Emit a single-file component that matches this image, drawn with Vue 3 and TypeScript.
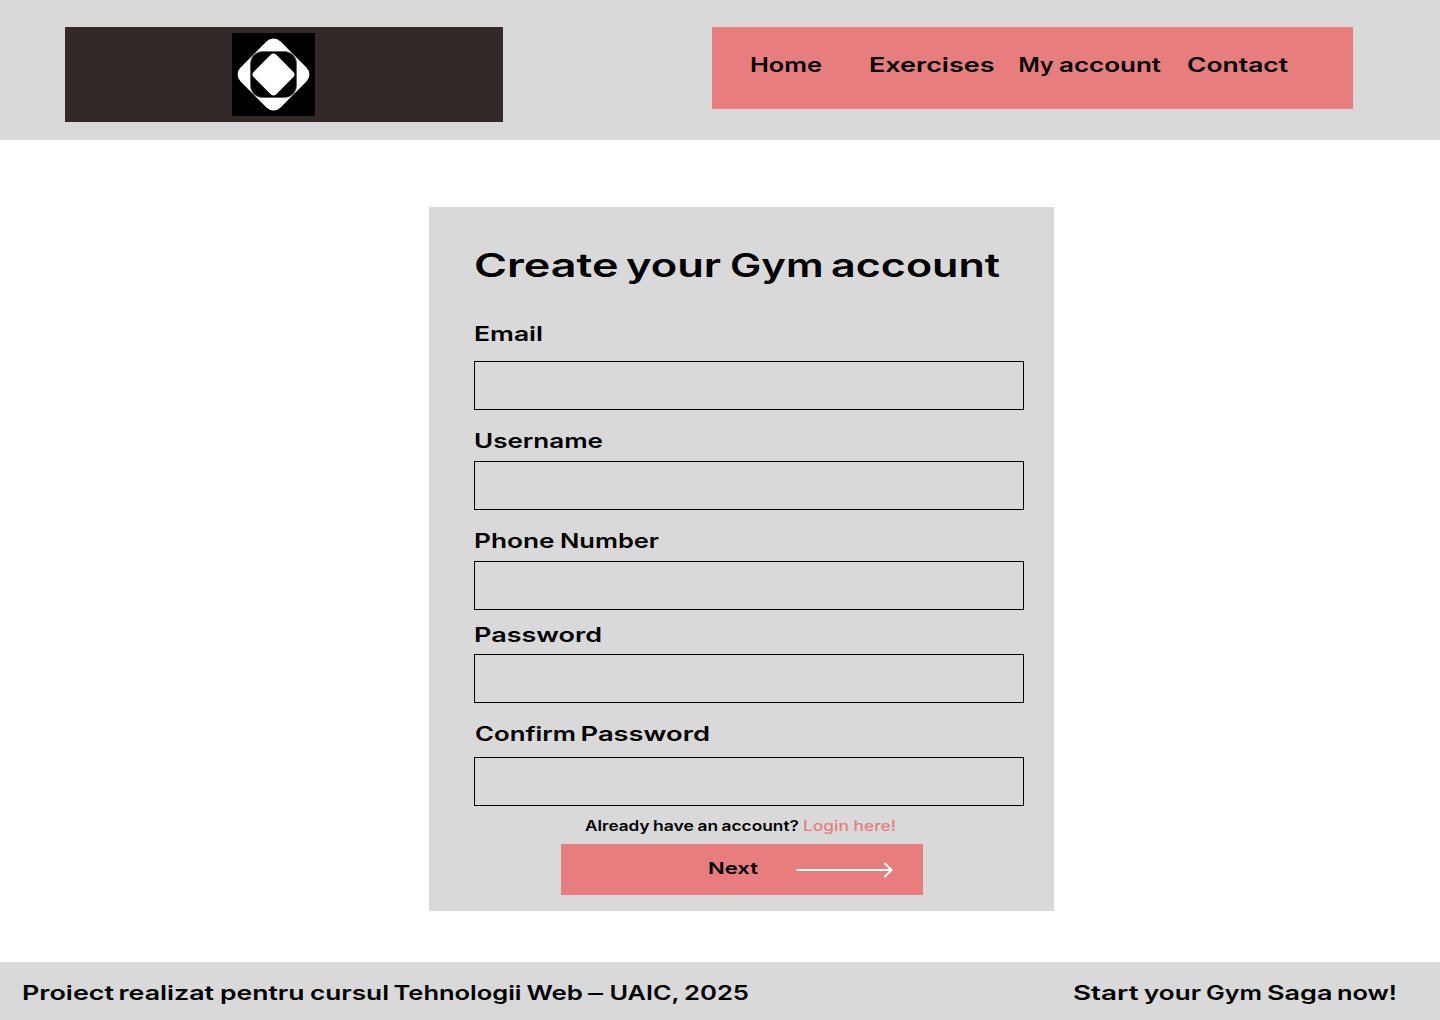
<script setup lang="ts">
import { h, type FunctionalComponent } from 'vue'

interface LabelProps {
  text: string
  width: number
  size: number
  // [start, end] of every word, in pixels from the label's left edge
  words?: number[][]
}

// Wide lettering: the glyphs are stretched to the given width.
const WideText: FunctionalComponent<LabelProps> = ({ text, width, size, words }) => {
  const spans = words ?? [[0, width]]
  const parts = words ? text.split(' ') : [text]
  return h('svg', { width, height: size, class: 'wide-text' }, [
    h('text', { y: size * 0.86, 'font-size': size }, parts.flatMap((part, i) => [
      i ? ' ' : '',
      h('tspan', {
        x: spans[i][0],
        textLength: spans[i][1] - spans[i][0],
        lengthAdjust: 'spacingAndGlyphs',
      }, part),
    ])),
  ])
}
WideText.props = ['text', 'width', 'size', 'words']

const links = [
  { text: 'Home', width: 72, gap: 0 },
  { text: 'Exercises', width: 125.5, gap: 47 },
  { text: 'My account', width: 142, gap: 24, words: [[0.5, 35.5], [41, 143]] },
  { text: 'Contact', width: 101, gap: 26.5 },
]

const fields = [
  { id: 'email', text: 'Email', type: 'email', width: 69, top: 42, gap: 17 },
  { id: 'username', text: 'Username', type: 'text', width: 129, top: 21, gap: 10 },
  { id: 'phone', text: 'Phone Number', type: 'tel', width: 185, top: 21, gap: 10, words: [[0, 80.5], [86, 185]] },
  { id: 'password', text: 'Password', type: 'password', width: 128, top: 15, gap: 9 },
  { id: 'confirm', text: 'Confirm Password', type: 'password', width: 236, top: 21, gap: 13, words: [[1, 102], [106.5, 236]] },
]

const titleWords = [[0, 144.5], [152, 247], [256, 349.5], [357, 526]]
const hintWords = [[0, 64.5], [68, 109], [112.5, 133], [136.5, 214]]
const creditWords = [
  [0, 92], [96.5, 192], [198, 282.5], [288, 367], [371.5, 499.5],
  [504.5, 561], [566, 581], [587.5, 657], [662, 727],
]
const sloganWords = [[0, 65.5], [71, 128], [133, 189], [194, 259.5], [264, 324]]
</script>

<template>
  <div class="page">
    <header class="header">
      <div class="brand">
        <svg class="logo" width="83" height="83" viewBox="0 0 83 83">
          <rect width="83" height="83" fill="#000" />
          <rect x="13.2" y="13.2" width="56.6" height="56.6" rx="10" fill="#fff" transform="rotate(45 41.5 41.5)" />
          <rect x="18.5" y="18.5" width="46" height="46" rx="12" fill="#000" stroke="#555" stroke-width="0.7" />
          <rect x="25.6" y="25.6" width="31.8" height="31.8" rx="4" fill="#fff" transform="rotate(45 41.5 41.5)" />
        </svg>
      </div>
      <nav class="nav">
        <a v-for="link in links" :key="link.text" :style="{ marginLeft: link.gap + 'px' }">
          <WideText :text="link.text" :width="link.width" :size="20.2" :words="link.words" />
        </a>
      </nav>
    </header>

    <main class="main">
      <form class="card" @submit.prevent>
        <h1><WideText text="Create your Gym account" :width="526" :size="32.6" :words="titleWords" /></h1>
        <div v-for="f in fields" :key="f.id" class="field" :style="{ paddingTop: f.top + 'px', rowGap: f.gap + 'px' }">
          <label :for="f.id"><WideText :text="f.text" :width="f.width" :size="20.2" :words="f.words" /></label>
          <input :id="f.id" :type="f.type" />
        </div>
        <p class="hint">
          <WideText text="Already have an account?" :width="214" :size="14" :words="hintWords" />
          <a><WideText text="Login here!" :width="93" :size="14" /></a>
        </p>
        <button class="next" type="submit">
          <WideText text="Next" :width="50" :size="16.4" />
          <svg class="arrow" width="98" height="18" viewBox="0 0 98 18" fill="none" stroke="#fff" stroke-width="2">
            <path d="M0.5 9H96M88.5 2L95.5 9L88.5 16" />
          </svg>
        </button>
      </form>
    </main>

    <footer class="footer">
      <WideText text="Proiect realizat pentru cursul Tehnologii Web – UAIC, 2025" :width="727" :size="20.2" :words="creditWords" />
      <WideText text="Start your Gym Saga now!" :width="325" :size="20.2" :words="sloganWords" />
    </footer>
  </div>
</template>

<style>
body {
  margin: 0;
}
</style>

<style scoped>
.page {
  width: 1440px;
  height: 1020px;
  display: flex;
  flex-direction: column;
  background: #fff;
  color: #000;
  font-family: Inter, "DejaVu Sans", sans-serif;
  font-weight: 600;
}
.wide-text {
  display: block;
  flex: none;
  overflow: visible;
  fill: currentColor;
}
.header {
  box-sizing: border-box;
  height: 140px;
  padding: 27px 87px 0 65px;
  display: flex;
  align-items: flex-start;
  justify-content: space-between;
  background: #d9d9d9;
}
.brand {
  box-sizing: border-box;
  width: 438px;
  height: 95px;
  padding: 6px 0 0 167px;
  background: #342929;
}
.logo {
  display: block;
}
.nav {
  box-sizing: border-box;
  width: 641px;
  height: 82px;
  padding: 28px 0 0 37.5px;
  display: flex;
  background: #e77d7d;
}
.main {
  flex: 1;
  padding: 67px 0 0 429px;
}
.card {
  box-sizing: border-box;
  width: 625.3px;
  height: 704px;
  padding: 42px 30px 0 45px;
  display: flex;
  flex-direction: column;
  background: #d9d9d9;
}
h1 {
  height: 33px;
  margin: 0;
  font-size: inherit;
  font-weight: 600;
}
.field {
  display: grid;
}
label {
  height: 20px;
}
input {
  box-sizing: border-box;
  width: 550.3px;
  height: 49px;
  margin: 0;
  padding: 0 12px;
  border: 1px solid #000;
  border-radius: 0;
  background: transparent;
  font: inherit;
}
.hint {
  display: flex;
  gap: 4px;
  height: 14px;
  margin: 13px 0 11px 111px;
}
.hint a {
  color: #e77d7d;
  font-weight: 500;
}
.next {
  box-sizing: border-box;
  width: 362px;
  height: 51px;
  margin: 0 0 0 87px;
  padding: 16px 0 0 147px;
  display: flex;
  align-items: flex-start;
  gap: 38px;
  border: 0;
  background: #e77d7d;
  color: #000;
  font: inherit;
}
.arrow {
  display: block;
  margin-top: 1px;
}
.footer {
  box-sizing: border-box;
  height: 58px;
  padding: 21px 42px 0 22px;
  display: flex;
  align-items: flex-start;
  justify-content: space-between;
  background: #d9d9d9;
}
</style>
